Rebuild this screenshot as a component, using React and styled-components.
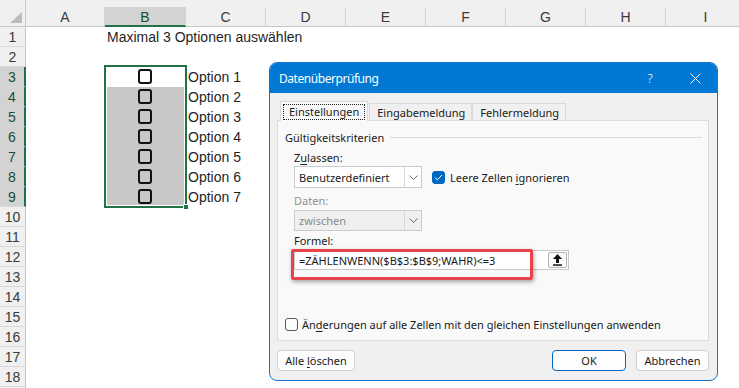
import React from 'react';
import styled, { createGlobalStyle } from 'styled-components';

const GlobalStyle = createGlobalStyle`
  html, body { margin: 0; padding: 0; background: #ffffff; }
  body { width: 739px; height: 388px; overflow: hidden; }
  *, *::before, *::after { box-sizing: border-box; }
`;

const SHEET_FONT = `"Liberation Sans", Arial, sans-serif`;
const UI_FONT = `"Noto Sans", "Segoe UI", sans-serif`;
const GREEN = '#217346';

const Page = styled.div`
  position: relative;
  width: 739px;
  height: 388px;
  overflow: hidden;
  font-family: ${SHEET_FONT};
`;

/* ---------- Spreadsheet ---------- */

const SheetGrid = styled.div`
  display: grid;
  grid-template-columns: 26px 79px 81px repeat(7, 80px);
  grid-template-rows: 27px repeat(19, 20px);
  font-size: 14px;
  color: #1f1f1f;
`;

const Corner = styled.div`
  grid-row: 1;
  grid-column: 1;
  background: #f0f0f0;
  border-right: 1px solid #c8c8c8;
  border-bottom: 1px solid #c8c8c8;
  display: flex;
  align-items: flex-end;
  justify-content: flex-end;
  padding: 0 3px 3px 0;
`;

const ColHeader = styled.div`
  grid-row: 1;
  grid-column: ${p => p.$c};
  background: #f0f0f0;
  padding-top: 7px;
  border-bottom: 1px solid ${p => (p.$active ? GREEN : '#c8c8c8')};
  display: flex;
`;

const ColLabel = styled.div`
  flex: 1;
  display: flex;
  align-items: center;
  justify-content: center;
  border-right: 1px solid #d4d4d4;
  background: ${p => (p.$active ? '#d3d3d3' : 'transparent')};
  box-shadow: ${p => (p.$active ? `inset 0 -1px 0 ${GREEN}` : 'none')};
  color: ${p => (p.$active ? '#1b4d2e' : '#3a3a3a')};
  font-size: 14px;
`;

const RowHeader = styled.div`
  grid-row: ${p => p.$r};
  grid-column: 1;
  background: ${p => (p.$active ? '#d3d3d3' : '#f0f0f0')};
  color: ${p => (p.$active ? '#1b4d2e' : '#3a3a3a')};
  border-bottom: 1px solid #d8d8d8;
  border-right: ${p => (p.$active ? `2px solid ${GREEN}` : '1px solid #c8c8c8')};
  display: flex;
  align-items: center;
  justify-content: center;
  font-size: 14px;
`;

const Cell = styled.div`
  grid-row: ${p => p.$r};
  grid-column: ${p => p.$c};
  background: ${p => (p.$fill ? '#c8c8c8' : 'transparent')};
  display: flex;
  align-items: center;
  justify-content: ${p => (p.$center ? 'center' : 'flex-start')};
  padding-left: ${p => (p.$center ? '0' : '2px')};
  white-space: nowrap;
  min-width: 0;
`;

const CellCheck = styled.span`
  display: block;
  width: 14px;
  height: 15px;
  border: 2px solid #111;
  border-radius: 3px;
  margin: 0 0 2px -2px;
`;

const Selection = styled.div`
  grid-row: 4 / 11;
  grid-column: 3;
  margin: -2px -1px -1px -1px;
  border: 2px solid ${GREEN};
  box-shadow: inset 0 0 0 1px #ffffff;
  position: relative;
  z-index: 2;
  pointer-events: none;
`;

const FillHandle = styled.span`
  position: absolute;
  right: -4px;
  bottom: -4px;
  width: 6px;
  height: 6px;
  background: ${GREEN};
  border: 1px solid #ffffff;
`;

/* ---------- Dialog ---------- */

const Dialog = styled.div`
  position: absolute;
  left: 269px;
  top: 62px;
  width: 449px;
  height: 319px;
  border: 1px solid #1474cf;
  border-radius: 8px;
  background: #f0f0f0;
  overflow: hidden;
  font-family: ${UI_FONT};
  font-size: 11px;
  color: #1a1a1a;
  display: flex;
  flex-direction: column;
  z-index: 5;
`;

const TitleBar = styled.div`
  height: 30px;
  flex: none;
  background: #0078d4;
  color: #ffffff;
  display: flex;
  align-items: center;
  padding: 0 10px 0 9px;
`;

const Title = styled.div`
  flex: 1;
  font-size: 12px;
  letter-spacing: -0.45px;
`;

const TitleButton = styled.div`
  width: 24px;
  height: 20px;
  display: flex;
  align-items: center;
  justify-content: center;
  margin-left: ${p => p.$gap || 0}px;
  font-size: 13px;
  font-weight: 300;
`;

const DialogBody = styled.div`
  flex: 1;
  display: flex;
  flex-direction: column;
  padding: 8px 8px 0 7px;
`;

const TabRow = styled.div`
  display: flex;
  align-items: flex-end;
  height: 19px;
  padding-left: 3px;
  position: relative;
  z-index: 1;
`;

const Tab = styled.div`
  height: ${p => (p.$active ? '20px' : '17px')};
  margin-bottom: ${p => (p.$active ? '-1px' : '0')};
  padding: ${p => (p.$active ? '0 2px' : '0 6px 0 7px')};
  background: ${p => (p.$active ? '#f9f9f9' : '#f0f0f0')};
  border: 1px solid #dadada;
  border-bottom: none;
  margin-right: ${p => (p.$active ? '1px' : '0')};
  display: flex;
  align-items: center;
  white-space: nowrap;
`;

const FocusLabel = styled.span`
  border: 1px dotted #222;
  padding: 0 5px;
  line-height: 14px;
`;

const Panel = styled.div`
  height: 221px;
  flex: none;
  background: #f9f9f9;
  border: 1px solid #dcdcdc;
  padding: 8px 6px 0 7px;
  display: flex;
  flex-direction: column;
`;

const GroupHeader = styled.div`
  height: 17px;
  display: flex;
  align-items: center;
  gap: 6px;
  white-space: nowrap;
`;

const GroupLine = styled.div`
  flex: 1;
  height: 1px;
  background: #dadada;
`;

const Group = styled.div`
  padding-left: 9px;
  display: flex;
  flex-direction: column;
`;

const FieldLabel = styled.div`
  height: 14px;
  line-height: 14px;
  margin-top: ${p => p.$mt}px;
  color: ${p => (p.$disabled ? '#8f8f8f' : '#1a1a1a')};
`;

const Acc = styled.span`
  text-decoration: underline;
  text-underline-offset: 2px;
`;

const SelectRow = styled.div`
  display: flex;
  align-items: center;
  gap: 10px;
  margin-top: 1px;
`;

const Select = styled.div`
  width: 128px;
  height: ${p => p.$h}px;
  margin-top: ${p => p.$mt || 0}px;
  border: 1px solid #cbcbcb;
  background: ${p => (p.$disabled ? '#efefef' : '#ffffff')};
  color: ${p => (p.$disabled ? '#8a8a8a' : '#1a1a1a')};
  display: flex;
  align-items: stretch;
`;

const SelectText = styled.div`
  flex: 1;
  display: flex;
  align-items: center;
  padding-left: 4px;
  white-space: nowrap;
`;

const DropBtn = styled.div`
  width: 17px;
  border-left: 1px solid #d6d6d6;
  display: flex;
  align-items: center;
  justify-content: center;
`;

const CheckLabel = styled.label`
  display: flex;
  align-items: center;
  gap: ${p => p.$gap || 5}px;
  white-space: nowrap;
`;

const CheckBox = styled.span`
  width: 13px;
  height: 13px;
  border-radius: 3px;
  flex: none;
  display: flex;
  align-items: center;
  justify-content: center;
  background: ${p => (p.$checked ? '#0067c0' : '#fbfbfb')};
  border: 1px solid ${p => (p.$checked ? '#0067c0' : '#5a5a5a')};
`;

const FormulaField = styled.div`
  position: relative;
  width: 275px;
  height: 20px;
  margin-top: 2px;
  border: 1px solid #c9c9c9;
  background: #ffffff;
  display: flex;
  align-items: center;
  padding-left: 4px;
`;

const FormulaText = styled.span`
  flex: 1;
  white-space: nowrap;
`;

const RefButton = styled.div`
  width: 19px;
  height: 16px;
  margin-right: 1px;
  border: 1px solid #b4b4b4;
  border-radius: 2px;
  background: #fbfbfb;
  display: flex;
  align-items: center;
  justify-content: center;
`;

const Highlight = styled.div`
  position: absolute;
  left: -4px;
  top: -2px;
  width: 242px;
  height: 31px;
  border: 3px solid #e8434b;
  border-radius: 2px;
  box-shadow: 1px 2px 4px rgba(0, 0, 0, 0.35);
  pointer-events: none;
`;

const ApplyRow = styled.div`
  margin-top: auto;
  margin-bottom: 9px;
  height: 14px;
`;

const ButtonRow = styled.div`
  display: flex;
  margin-top: 9px;
  height: 21px;
  gap: 10px;
`;

const Button = styled.div`
  width: ${p => p.$w}px;
  margin-right: ${p => (p.$push ? 'auto' : '0')};
  border: 1px solid ${p => (p.$primary ? '#0067c0' : '#d0d0d0')};
  border-radius: 4px;
  background: #fdfdfd;
  display: flex;
  align-items: center;
  justify-content: center;
  white-space: nowrap;
`;

/* ---------- Icons ---------- */

const CornerTriangle = () => (
  <svg width="12" height="11" viewBox="0 0 12 11">
    <polygon points="0,11 12,11 12,0" fill="#bcbcbc" />
  </svg>
);

const CloseIcon = () => (
  <svg width="11" height="11" viewBox="0 0 11 11">
    <path d="M0.5 0.5 L10.5 10.5 M10.5 0.5 L0.5 10.5" stroke="#ffffff" strokeWidth="1" />
  </svg>
);

const Chevron = () => (
  <svg width="9" height="5" viewBox="0 0 9 5">
    <path d="M0.5 0.5 L4.5 4.5 L8.5 0.5" stroke="#6a6a6a" strokeWidth="1" fill="none" />
  </svg>
);

const CheckMark = () => (
  <svg width="9" height="7" viewBox="0 0 9 7">
    <path d="M1 3.6 L3.3 5.8 L8 1" stroke="#ffffff" strokeWidth="1" fill="none" />
  </svg>
);

const RefIcon = () => (
  <svg width="9" height="12" viewBox="0 0 9 12">
    <path d="M4.5 0 L9 5 H6 V9 H3 V5 H0 Z" fill="#111" />
    <rect x="0" y="10.3" width="9" height="1.5" fill="#111" />
  </svg>
);

/* ---------- Data ---------- */

const COLS = ['A', 'B', 'C', 'D', 'E', 'F', 'G', 'H', 'I'];
const ROWS = Array.from({ length: 19 }, (_, i) => i + 1);

function renderCell(r, ci) {
  const col = COLS[ci];
  const gr = r + 1;
  const gc = ci + 2;
  const key = `${col}${r}`;
  if (col === 'B' && r === 1) {
    return (
      <Cell key={key} $r={gr} $c={gc}>
        Maximal 3 Optionen auswählen
      </Cell>
    );
  }
  if (col === 'B' && r >= 3 && r <= 9) {
    return (
      <Cell key={key} $r={gr} $c={gc} $center $fill={r >= 4}>
        <CellCheck />
      </Cell>
    );
  }
  if (col === 'C' && r >= 3 && r <= 9) {
    return (
      <Cell key={key} $r={gr} $c={gc}>
        Option {r - 2}
      </Cell>
    );
  }
  return <Cell key={key} $r={gr} $c={gc} />;
}

export default function App() {
  return (
    <Page>
      <GlobalStyle />
      <SheetGrid>
        <Corner>
          <CornerTriangle />
        </Corner>
        {COLS.map((c, i) => (
          <ColHeader key={c} $c={i + 2} $active={c === 'B'}>
            <ColLabel $active={c === 'B'}>{c}</ColLabel>
          </ColHeader>
        ))}
        {ROWS.map(r => (
          <React.Fragment key={r}>
            <RowHeader $r={r + 1} $active={r >= 3 && r <= 9}>
              {r < 19 ? r : ''}
            </RowHeader>
            {COLS.map((_, ci) => renderCell(r, ci))}
          </React.Fragment>
        ))}
        <Selection>
          <FillHandle />
        </Selection>
      </SheetGrid>

      <Dialog>
        <TitleBar>
          <Title>Datenüberprüfung</Title>
          <TitleButton>?</TitleButton>
          <TitleButton $gap={21}>
            <CloseIcon />
          </TitleButton>
        </TitleBar>
        <DialogBody>
          <TabRow>
            <Tab $active>
              <FocusLabel>Einstellungen</FocusLabel>
            </Tab>
            <Tab>Eingabemeldung</Tab>
            <Tab>Fehlermeldung</Tab>
          </TabRow>
          <Panel>
            <GroupHeader>
              <span>Gültigkeitskriterien</span>
              <GroupLine />
            </GroupHeader>
            <Group>
              <FieldLabel $mt={5}>
                Z<Acc>u</Acc>lassen:
              </FieldLabel>
              <SelectRow>
                <Select $h={22}>
                  <SelectText>Benutzerdefiniert</SelectText>
                  <DropBtn>
                    <Chevron />
                  </DropBtn>
                </Select>
                <CheckLabel>
                  <CheckBox $checked>
                    <CheckMark />
                  </CheckBox>
                  <span>
                    Leere Zellen <Acc>i</Acc>gnorieren
                  </span>
                </CheckLabel>
              </SelectRow>
              <FieldLabel $mt={6} $disabled>
                Daten:
              </FieldLabel>
              <Select $h={21} $mt={2} $disabled>
                <SelectText>zwischen</SelectText>
                <DropBtn>
                  <Chevron />
                </DropBtn>
              </Select>
              <FieldLabel $mt={3}>Formel:</FieldLabel>
              <FormulaField>
                <FormulaText>=ZÄHLENWENN($B$3:$B$9;WAHR)&lt;=3</FormulaText>
                <RefButton>
                  <RefIcon />
                </RefButton>
                <Highlight />
              </FormulaField>
            </Group>
            <ApplyRow>
              <CheckLabel $gap={4}>
                <CheckBox />
                <span>
                  Än<Acc>d</Acc>erungen auf alle Zellen mit den gleichen Einstellungen anwenden
                </span>
              </CheckLabel>
            </ApplyRow>
          </Panel>
          <ButtonRow>
            <Button $w={78} $push>
              <span>
                Alle <Acc>l</Acc>öschen
              </span>
            </Button>
            <Button $w={74} $primary>
              OK
            </Button>
            <Button $w={73}>Abbrechen</Button>
          </ButtonRow>
        </DialogBody>
      </Dialog>
    </Page>
  );
}
